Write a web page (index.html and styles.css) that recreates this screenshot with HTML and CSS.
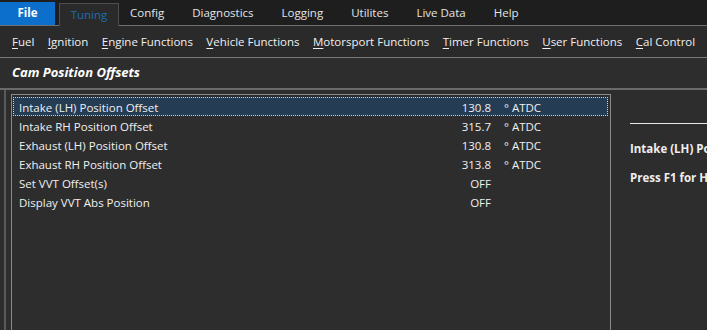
FILE: index.html
```html
<!DOCTYPE html>
<html lang="en">
<head>
    <meta charset="UTF-8">
    <title>Cam Position Offsets</title>
    <link rel="stylesheet" href="styles.css">
</head>
<body>
    <div class="app">
        <nav class="menubar">
            <span class="menu-tab file">File</span>
            <span class="menu-tab active">Tuning</span>
            <span class="menu-tab">Config</span>
            <span class="menu-tab">Diagnostics</span>
            <span class="menu-tab">Logging</span>
            <span class="menu-tab">Utilites</span>
            <span class="menu-tab">Live Data</span>
            <span class="menu-tab">Help</span>
        </nav>
        <nav class="ribbon">
            <span class="ribbon-item"><u>F</u>uel</span>
            <span class="ribbon-item"><u>I</u>gnition</span>
            <span class="ribbon-item"><u>E</u>ngine Functions</span>
            <span class="ribbon-item"><u>V</u>ehicle Functions</span>
            <span class="ribbon-item"><u>M</u>otorsport Functions</span>
            <span class="ribbon-item"><u>T</u>imer Functions</span>
            <span class="ribbon-item"><u>U</u>ser Functions</span>
            <span class="ribbon-item"><u>C</u>al Control</span>
            <span class="ribbon-sep"></span>
        </nav>

        <div class="page">
            <h1 class="page-title">Cam Position Offsets</h1>
            <div class="workspace">
                <div class="list-frame">
                    <ul class="param-list">
                        <li class="param selected"><span class="name">Intake (LH) Position Offset</span><span class="value">130.8</span><span class="unit">° ATDC</span></li>
                        <li class="param"><span class="name">Intake RH Position Offset</span><span class="value">315.7</span><span class="unit">° ATDC</span></li>
                        <li class="param"><span class="name">Exhaust (LH) Position Offset</span><span class="value">130.8</span><span class="unit">° ATDC</span></li>
                        <li class="param"><span class="name">Exhaust RH Position Offset</span><span class="value">313.8</span><span class="unit">° ATDC</span></li>
                        <li class="param"><span class="name">Set VVT Offset(s)</span><span class="value">OFF</span><span class="unit"></span></li>
                        <li class="param"><span class="name">Display VVT Abs Position</span><span class="value">OFF</span><span class="unit"></span></li>
                    </ul>
                </div>
                <aside class="help-panel">
                    <div class="help-rule"></div>
                    <p class="help-title">Intake (LH) Position Offset</p>
                    <p class="help-text">Press F1 for Help</p>
                </aside>
            </div>
        </div>
    </div>
</body>
</html>
```

FILE: styles.css
```css
* { box-sizing: border-box; }
html, body { margin: 0; padding: 0; background-color: #2d2d2d; overflow: hidden; }
body { font-family: 'Open Sans', 'Noto Sans', sans-serif; font-size: 11.5px; color: #f0f0f0; }
.app { width: 707px; height: 330px; display: flex; flex-direction: column; }

/* top menu */
.menubar {
    display: flex;
    align-items: flex-end;
    height: 26px;
    background-color: #1e1e1e;
    border-bottom: 1px solid #6e6e6e;
}
.menu-tab {
    height: 23px;
    line-height: 22px;
    padding: 0 14px;
    color: #e4e4e4;
    white-space: nowrap;
}
.menu-tab.file {
    width: 55px;
    height: 23px;
    padding: 0;
    text-align: center;
    background-color: #0b6fcb;
    color: #ffffff;
    font-weight: bold;
}
.menu-tab.active {
    width: 60px;
    margin-left: 4px;
    margin-right: -3px;
    margin-bottom: -1px;
    height: 23px;
    padding: 0;
    text-align: center;
    background-color: #2a2a2a;
    border: 1px solid #4e4e4e;
    border-bottom: none;
    color: #1d6db3;
}

/* sub menu */
.ribbon {
    display: flex;
    align-items: center;
    gap: 13.5px;
    height: 32px;
    padding-left: 12px;
    background-color: #2a2a2a;
    border-bottom: 1px solid #7a7a7a;
}
.ribbon-item { color: #f0f0f0; white-space: nowrap; }
.ribbon-item u { text-underline-offset: 2px; }
.ribbon-sep { margin-left: auto; width: 1px; height: 28px; background-color: #7a7a7a; margin-right: 1px; }

/* content */
.page { flex: 1; display: flex; flex-direction: column; }
.page-title {
    margin: 0;
    height: 32px;
    line-height: 29px;
    padding-left: 12px;
    font-size: 13px;
    font-weight: bold;
    font-style: italic;
    color: #ffffff;
    border-bottom: 2px solid #6a6a6a;
}
.workspace { flex: 1; display: flex; min-width: 0; }
.list-frame {
    flex: 0 0 607px;
    margin-left: 4px;
    padding: 4px 0 0 5px;
    border-left: 2px solid #5a5a5a;
}
.param-list {
    list-style: none;
    margin: 0;
    padding: 2px 2px 0 1px;
    height: 100%;
    border-left: 1px solid #8a8a8a;
    border-top: 1px solid #8a8a8a;
    border-right: 1px solid #8a8a8a;
}
.param {
    display: flex;
    height: 19px;
    line-height: 19px;
    padding-left: 5px;
    border: 1px solid transparent;
}
.param.selected {
    background-color: #253c55;
    border: 1px dotted #d0d0d0;
}
.param .name { flex: 1; }
.param .value { width: 60px; text-align: right; }
.param .unit { width: 116px; padding-left: 13px; }

.help-panel { flex: 1; min-width: 0; overflow: hidden; padding: 33px 0 0 19px; }
.help-rule { height: 1px; background-color: #e8e8e8; margin-bottom: 16px; }
.help-panel p { margin: 0 0 11px; font-weight: bold; white-space: nowrap; line-height: 18px; color: #eeeeee; }
```
